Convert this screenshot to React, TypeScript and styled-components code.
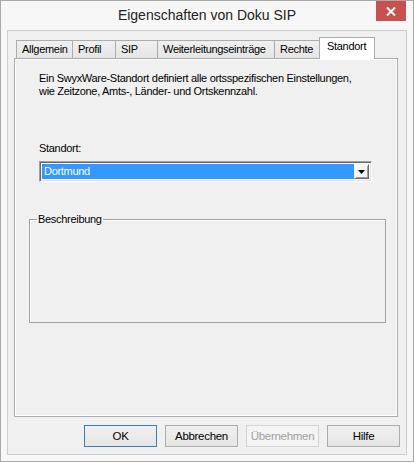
import React from 'react';
import styled, { createGlobalStyle } from 'styled-components';

const GlobalStyle = createGlobalStyle`
  html, body {
    margin: 0;
    padding: 0;
    background: #ffffff;
  }
  body {
    font-family: "Liberation Sans", Arial, sans-serif;
    font-size: 11px;
    letter-spacing: -0.3px;
    color: #000;
  }
  * {
    box-sizing: border-box;
  }
`;

const Window = styled.div`
  width: 414px;
  height: 462px;
  border: 1px solid #a9a9a9;
  background: #f7f7f7;
  padding: 0 6px 6px 6px;
  display: flex;
  flex-direction: column;
`;

const TitleBar = styled.div`
  height: 29px;
  display: grid;
  grid-template-columns: 1fr auto 1fr;
`;

const Title = styled.div`
  grid-column: 2;
  font-size: 14px;
  letter-spacing: 0;
  line-height: 29px;
  color: #222;
`;

const CloseButton = styled.div`
  grid-column: 3;
  justify-self: end;
  align-self: start;
  width: 30px;
  height: 20px;
  margin-right: 1px;
  background: #c75050;
  display: flex;
  align-items: center;
  justify-content: center;
`;

const Client = styled.div`
  height: 425px;
  border: 1px solid #cdcdcd;
  background: #f0f0f0;
  display: flex;
  flex-direction: column;
`;

const TabRow = styled.div`
  display: flex;
  align-items: flex-end;
  height: 22px;
  margin: 6px 0 -1px 8px;
  position: relative;
  z-index: 1;
`;

const Tab = styled.div<{ $w: number; $active?: boolean }>`
  width: ${(p) => p.$w}px;
  height: ${(p) => (p.$active ? 22 : 18)}px;
  margin-bottom: ${(p) => (p.$active ? 0 : 1)}px;
  margin-left: -1px;
  border: 1px solid #acacac;
  border-bottom: none;
  padding: 2px 0 0 ${(p) => (p.$active ? 7 : 5)}px;
  line-height: 13px;
  white-space: nowrap;
  background: ${(p) =>
    p.$active ? '#ffffff' : 'linear-gradient(#f0f0f0, #e5e5e5)'};
  &:first-child {
    margin-left: 0;
  }
`;

const Panel = styled.div`
  height: 359px;
  margin: 0 8px 0 6px;
  border: 1px solid #acacac;
  box-shadow: inset 0 0 0 1px #ffffff;
  padding: 13px 0 0 24px;
  display: flex;
  flex-direction: column;
`;

const Text = styled.div`
  line-height: 13px;
`;

const FieldLabel = styled.div`
  line-height: 13px;
  margin-top: 44px;
`;

const Combo = styled.div`
  width: 333px;
  height: 21px;
  margin-top: 6px;
  border-top: 1px solid #a0a0a0;
  border-left: 1px solid #a0a0a0;
  border-right: 1px solid #ffffff;
  border-bottom: 1px solid #ffffff;
  box-shadow: inset 1px 1px 0 #696969, inset -1px -1px 0 #e3e3e3;
  background: #ffffff;
  padding: 2px;
  display: flex;
`;

const ComboValue = styled.div`
  flex: 1;
  background: #3399ff;
  color: #ffffff;
  line-height: 15px;
  padding-left: 2px;
`;

const ComboButton = styled.div`
  width: 15px;
  background: #f4f4f4;
  border-top: 1px solid #f0f0f0;
  border-left: 1px solid #f0f0f0;
  border-right: 1px solid #696969;
  border-bottom: 1px solid #696969;
  box-shadow: inset 1px 1px 0 #ffffff, inset -1px -1px 0 #a0a0a0;
  display: flex;
  align-items: center;
  justify-content: center;
`;

const GroupBox = styled.fieldset`
  width: 357px;
  height: 110px;
  margin: 31px 0 0 -10px;
  padding: 0 7px;
  border: 1px solid #a0a0a0;
  box-shadow: inset 1px 1px 0 #ffffff;
  min-width: 0;
`;

const Legend = styled.legend`
  padding: 0 1px;
  line-height: 13px;
`;

const ButtonRow = styled.div`
  display: flex;
  justify-content: flex-end;
  gap: 8px;
  margin: 8px 6px 0 0;
`;

const Button = styled.div<{ $default?: boolean; $disabled?: boolean }>`
  width: 73px;
  height: 22px;
  border: 1px solid
    ${(p) => (p.$default ? '#3c7fb1' : p.$disabled ? '#d5d5d5' : '#acacac')};
  background: ${(p) =>
    p.$disabled ? '#f4f4f4' : 'linear-gradient(#f0f0f0, #e5e5e5)'};
  color: ${(p) => (p.$disabled ? '#a0a0a0' : '#000')};
  display: flex;
  align-items: center;
  justify-content: center;
  font-size: 11.5px;
`;

const tabs = [
  { label: 'Allgemein', w: 57 },
  { label: 'Profil', w: 44 },
  { label: 'SIP', w: 43 },
  { label: 'Weiterleitungseinträge', w: 118 },
  { label: 'Rechte', w: 46 },
  { label: 'Standort', w: 56, active: true },
];

const App = () => {
  return (
    <>
      <GlobalStyle />
      <Window>
        <TitleBar>
          <Title>Eigenschaften von Doku SIP</Title>
          <CloseButton>
            <svg width="10" height="9" viewBox="0 0 10 9">
              <path d="M1 0.5 L9 8.5 M9 0.5 L1 8.5" stroke="#fff" strokeWidth="2" />
            </svg>
          </CloseButton>
        </TitleBar>
        <Client>
          <TabRow>
            {tabs.map((t) => (
              <Tab key={t.label} $w={t.w} $active={t.active}>
                {t.label}
              </Tab>
            ))}
          </TabRow>
          <Panel>
            <Text>
              Ein SwyxWare-Standort definiert alle ortsspezifischen Einstellungen,
              <br />
              wie Zeitzone, Amts-, Länder- und Ortskennzahl.
            </Text>
            <FieldLabel>Standort:</FieldLabel>
            <Combo>
              <ComboValue>Dortmund</ComboValue>
              <ComboButton>
                <svg width="7" height="4" viewBox="0 0 7 4">
                  <path d="M0 0 H7 L3.5 4 Z" fill="#000" />
                </svg>
              </ComboButton>
            </Combo>
            <GroupBox>
              <Legend>Beschreibung</Legend>
            </GroupBox>
          </Panel>
          <ButtonRow>
            <Button $default>OK</Button>
            <Button>Abbrechen</Button>
            <Button $disabled>Übernehmen</Button>
            <Button>Hilfe</Button>
          </ButtonRow>
        </Client>
      </Window>
    </>
  );
};

export default App;
